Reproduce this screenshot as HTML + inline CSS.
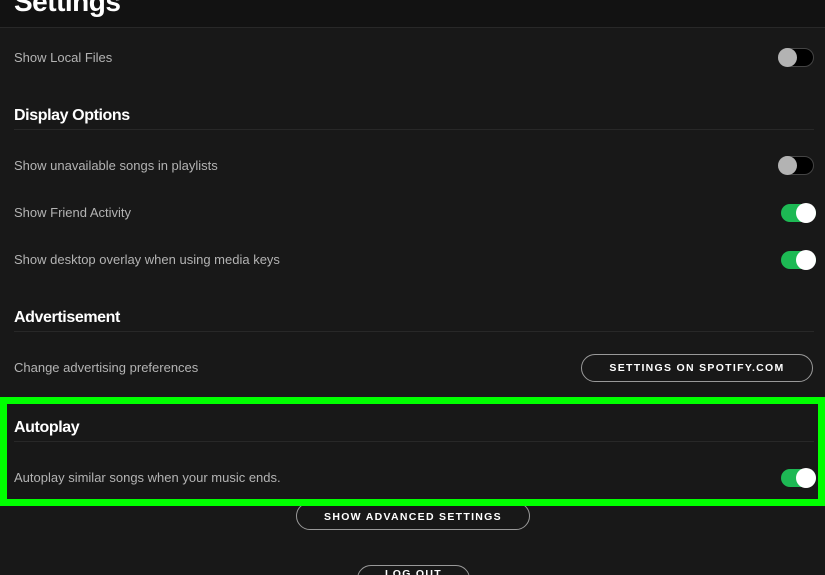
<!DOCTYPE html>
<html><head><style>
*{margin:0;padding:0;box-sizing:border-box}
html,body{width:825px;height:575px;overflow:hidden}
body{background:#181818;font-family:"Liberation Sans",sans-serif;position:relative}
.hdr{position:absolute;left:0;top:0;width:825px;height:28px;background:#121212;border-bottom:1px solid #282828}
.title{position:absolute;left:14px;top:-14px;font-size:28px;font-weight:bold;color:#fff;letter-spacing:-0.5px}
.lbl{position:absolute;left:14px;font-size:13px;color:#b3b3b3}
.h{position:absolute;left:14px;font-size:16px;font-weight:bold;color:#fff;letter-spacing:-0.4px}
.div{position:absolute;left:14px;width:800px;height:1px;background:#282828}
.off{position:absolute;left:778px;width:36px;height:19px;border-radius:10px;background:#000;border:1px solid #444}
.off::before{content:"";position:absolute;left:-1px;top:-1px;width:19px;height:19px;border-radius:50%;background:#b3b3b3}
.on{position:absolute;left:781px;width:35px;height:18px;border-radius:9px;background:#1db954}
.on::before{content:"";position:absolute;right:0;top:-1px;width:20px;height:20px;border-radius:50%;background:#fff}
.btn{position:absolute;border:1px solid #999;border-radius:16px;color:#fff;font-size:10.5px;font-weight:bold;letter-spacing:1.3px;text-align:center}
.gb{position:absolute;left:0;top:397px;width:825px;height:109px;border:7px solid #00ff00}
</style></head><body>
<div class="hdr"></div>
<div class="title">Settings</div>
<div class="lbl" style="top:50px">Show Local Files</div>
<div class="off" style="top:48px"></div>
<div class="h" style="top:107px">Display Options</div>
<div class="div" style="top:129px"></div>
<div class="lbl" style="top:158px">Show unavailable songs in playlists</div>
<div class="off" style="top:156px"></div>
<div class="lbl" style="top:205px">Show Friend Activity</div>
<div class="on" style="top:204px"></div>
<div class="lbl" style="top:252px">Show desktop overlay when using media keys</div>
<div class="on" style="top:251px"></div>
<div class="h" style="top:309px">Advertisement</div>
<div class="div" style="top:331px"></div>
<div class="lbl" style="top:360px">Change advertising preferences</div>
<div class="btn" style="left:581px;top:354px;width:232px;height:28px;line-height:26px">SETTINGS ON SPOTIFY.COM</div>
<div class="h" style="top:419px">Autoplay</div>
<div class="div" style="top:441px"></div>
<div class="lbl" style="top:470px">Autoplay similar songs when your music ends.</div>
<div class="on" style="top:469px"></div>
<div class="btn" style="left:296px;top:502px;width:234px;height:28px;line-height:28px">SHOW ADVANCED SETTINGS</div>
<div class="btn" style="left:357px;top:565px;width:113px;height:28px;line-height:16px">LOG OUT</div>
<div class="gb"></div>
</body></html>
